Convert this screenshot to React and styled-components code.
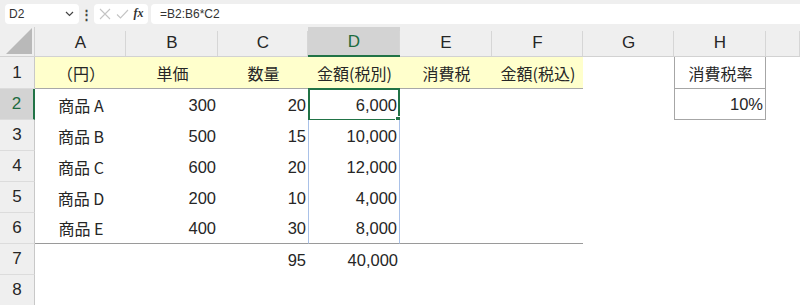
import React from "react";
import styled, { createGlobalStyle } from "styled-components";

const GlobalStyle = createGlobalStyle`
  html, body { margin: 0; padding: 0; background: #fff; }
  body { font-family: "Noto Sans CJK JP", "Liberation Sans", sans-serif; color: #222; }
`;

const COLS = [91, 92, 90, 92, 92, 91, 91, 92];
const LETTERS = ["A", "B", "C", "D", "E", "F", "G", "H"];

const rows = [
  ["（円）", "単価", "数量", "金額(税別)", "消費税", "金額(税込)", "", "消費税率"],
  ["商品 A", "300", "20", "6,000", "", "", "", "10%"],
  ["商品 B", "500", "15", "10,000", "", "", "", ""],
  ["商品 C", "600", "20", "12,000", "", "", "", ""],
  ["商品 D", "200", "10", "4,000", "", "", "", ""],
  ["商品 E", "400", "30", "8,000", "", "", "", ""],
  ["", "", "95", "40,000", "", "", "", ""],
  ["", "", "", "", "", "", "", ""],
];

const isNum = (v) => /^[0-9,%]+$/.test(v);

const Page = styled.div`
  width: 800px;
  height: 305px;
  overflow: hidden;
  background: #fff;
`;

const FormulaBar = styled.div`
  height: 27px;
  background: #efefef;
  display: flex;
  align-items: center;
  padding: 0 0 0 5px;
  box-sizing: border-box;
`;

const NameBox = styled.div`
  width: 74px;
  height: 20px;
  background: #fff;
  border-radius: 4px;
  display: flex;
  align-items: center;
  justify-content: space-between;
  padding: 0 5px 0 4px;
  box-sizing: border-box;
  font-family: "Liberation Sans", sans-serif;
  font-size: 12px;
  color: #333;
`;

const Dots = styled.div`
  width: 15px;
  display: flex;
  justify-content: center;
  font-size: 13px;
  color: #444;
  font-weight: bold;
  line-height: 1;
`;

const IconBox = styled.div`
  width: 54px;
  height: 20px;
  background: #fff;
  border-radius: 4px;
  display: flex;
  align-items: center;
  justify-content: space-around;
  padding: 0 2px;
  box-sizing: border-box;
`;

const Fx = styled.span`
  font-family: "Liberation Serif", serif;
  font-style: italic;
  font-weight: bold;
  font-size: 12px;
  color: #333;
`;

const FormulaInput = styled.div`
  flex: 1;
  height: 20px;
  margin-left: 3px;
  background: #fff;
  border-radius: 4px 0 0 4px;
  display: flex;
  align-items: center;
  padding-left: 9px;
  font-family: "Liberation Sans", sans-serif;
  font-size: 12px;
  color: #333;
`;

const Sheet = styled.div`
  display: grid;
  grid-template-columns: 35px ${COLS.map((c) => c + "px").join(" ")} 1fr;
  grid-template-rows: 30px 32px repeat(7, 31px);
`;

const Corner = styled.div`
  background: #efefef;
  border-right: 1px solid #d2d2d2;
  border-bottom: 1px solid #d2d2d2;
  position: relative;
  box-sizing: border-box;
  &::after {
    content: "";
    position: absolute;
    right: 2px;
    bottom: 2px;
    width: 0;
    height: 0;
    border-left: 26px solid transparent;
    border-bottom: 26px solid #b9b9b9;
  }
`;

const ColHead = styled.div`
  background: ${(p) => (p.$sel ? "#d3d3d3" : "#efefef")};
  color: ${(p) => (p.$sel ? "#1d6b3f" : "#262626")};
  border-bottom: ${(p) => (p.$sel ? "2px solid #217346" : "1px solid #d2d2d2")};
  position: relative;
  display: flex;
  align-items: center;
  justify-content: center;
  box-sizing: border-box;
  font-family: "Liberation Sans", sans-serif;
  font-size: 17px;
  padding-top: 2px;
  &::after {
    content: "";
    position: absolute;
    right: 0;
    top: 4px;
    bottom: 0;
    width: 1px;
    background: #d6d6d6;
  }
`;

const RowHead = styled.div`
  background: ${(p) => (p.$sel ? "#d3d3d3" : "#efefef")};
  color: ${(p) => (p.$sel ? "#1d6b3f" : "#262626")};
  border-right: ${(p) => (p.$sel ? "2px solid #217346" : "1px solid #c8c8c8")};
  border-bottom: 1px solid #dcdcdc;
  display: flex;
  align-items: center;
  justify-content: center;
  box-sizing: border-box;
  font-family: "Liberation Sans", sans-serif;
  font-size: 17px;
`;

const Cell = styled.div`
  background: ${(p) => p.$bg || "#fff"};
  display: flex;
  align-items: center;
  justify-content: ${(p) => p.$align};
  padding: 0 2px 0 3px;
  box-sizing: border-box;
  font-size: 16px;
  color: #262626;
  white-space: nowrap;
  position: relative;
  border-top: ${(p) => p.$bt || "none"};
  border-bottom: ${(p) => p.$bb || "none"};
  border-left: ${(p) => p.$bl || "none"};
  border-right: ${(p) => p.$br || "none"};
`;

const Num = styled.span`
  font-family: "Liberation Sans", sans-serif;
  font-size: 16.5px;
  padding-top: 1px;
`;

const ActiveFrame = styled.div`
  position: absolute;
  left: -1px;
  top: -1px;
  right: -1px;
  bottom: -1px;
  border: 2px solid #217346;
  pointer-events: none;
  &::after {
    content: "";
    position: absolute;
    right: -4px;
    bottom: -4px;
    width: 5px;
    height: 5px;
    background: #217346;
    border: 1px solid #fff;
  }
`;

const SPILL = "1px solid #a9c1e8";
const GRID = "1px solid #a6a6a6";

function cellProps(r, c, value) {
  const p = { $align: isNum(value) ? "flex-end" : "center" };
  if (r === 0 && c <= 5) {
    p.$bg = "#ffffcc";
    p.$bb = "1px solid #a8a8a8";
  }
  if (r === 5 && c <= 5) p.$bb = "1px solid #9a9a9a";
  if (c === 3 && r >= 1 && r <= 5) {
    p.$bl = SPILL;
    p.$br = SPILL;
  }
  if (c === 7 && r <= 1) {
    p.$bl = GRID;
    p.$br = GRID;
    p.$bb = GRID;
  }
  return p;
}

function App() {
  return (
    <Page>
      <GlobalStyle />
      <FormulaBar>
        <NameBox>
          <span>D2</span>
          <svg width="9" height="6" viewBox="0 0 9 6">
            <path d="M1 1l3.5 3.5L8 1" fill="none" stroke="#444" strokeWidth="1.2" />
          </svg>
        </NameBox>
        <Dots>⋮</Dots>
        <IconBox>
          <svg width="12" height="12" viewBox="0 0 12 12">
            <path d="M1 1l10 10M11 1L1 11" stroke="#c4c4c4" strokeWidth="1.1" />
          </svg>
          <svg width="13" height="12" viewBox="0 0 13 12">
            <path d="M1 6.5l3.5 3.5L12 2" fill="none" stroke="#c4c4c4" strokeWidth="1.1" />
          </svg>
          <Fx>fx</Fx>
        </IconBox>
        <FormulaInput>=B2:B6*C2</FormulaInput>
      </FormulaBar>
      <Sheet>
        <Corner />
        {LETTERS.map((l) => (
          <ColHead key={l} $sel={l === "D"}>
            {l}
          </ColHead>
        ))}
        <ColHead />
        {rows.map((row, r) => (
          <React.Fragment key={r}>
            <RowHead $sel={r === 1}>{r + 1}</RowHead>
            {row.map((v, c) => (
              <Cell key={c} {...cellProps(r, c, v)}>
                {isNum(v) ? <Num>{v}</Num> : v}
                {r === 1 && c === 3 && <ActiveFrame />}
              </Cell>
            ))}
            <Cell $align="center" />
          </React.Fragment>
        ))}
      </Sheet>
    </Page>
  );
}

export default App;
